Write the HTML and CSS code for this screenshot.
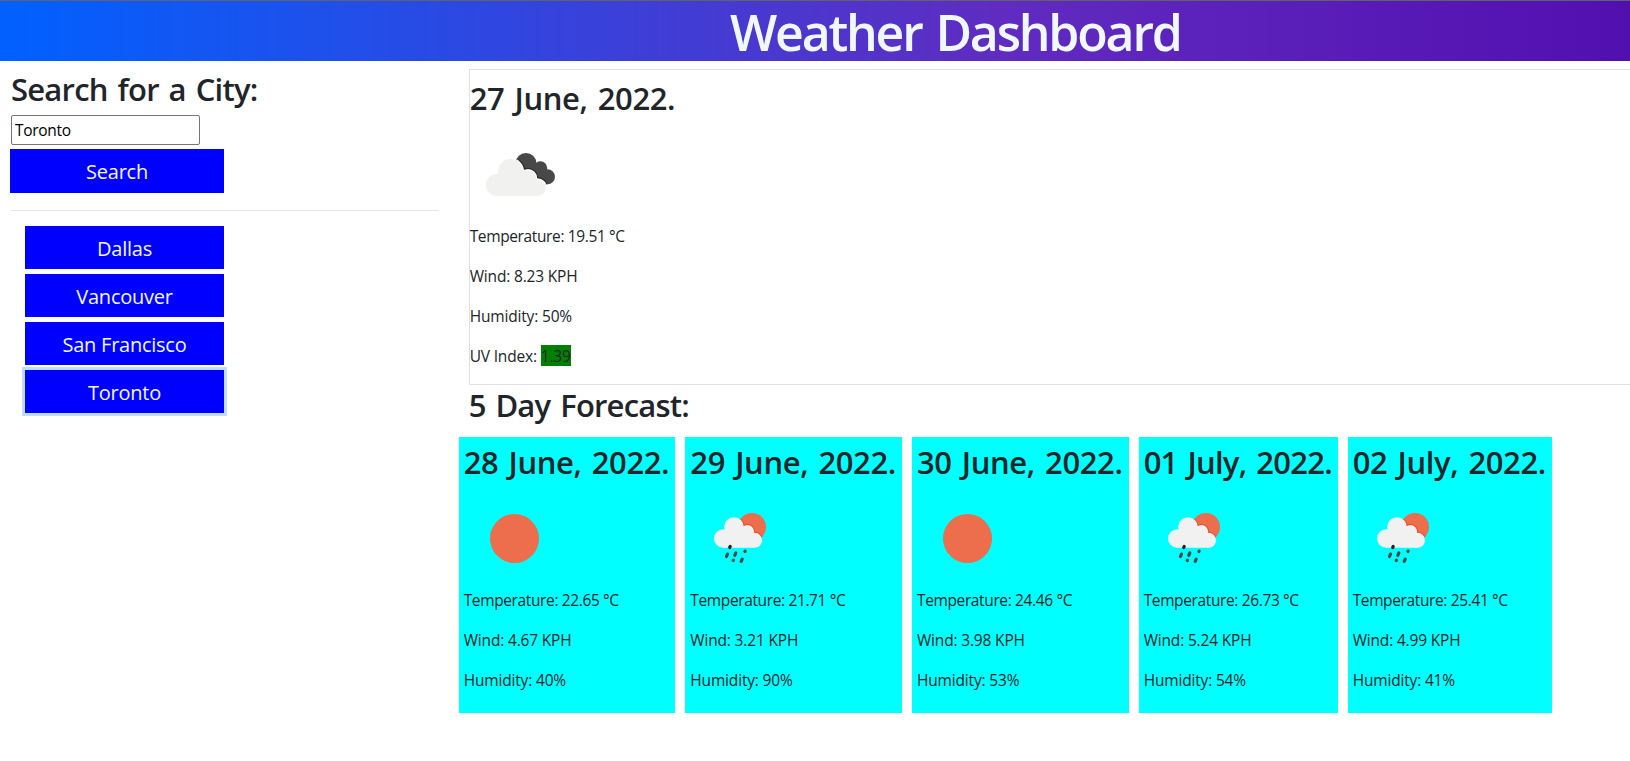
FILE: index.html
```html
<!DOCTYPE html>
<html lang="en">
<head>
<meta charset="utf-8">
<title>Weather Dashboard</title>
<link rel="stylesheet" href="styles.css">
</head>
<body>
<svg width="0" height="0" class="defs" aria-hidden="true">
  <clipPath id="sun-clip"><circle cx="62" cy="39" r="14"/></clipPath>
  <clipPath id="dark-clip"><circle cx="56" cy="38.500" r="10.500"/><circle cx="70.500" cy="43" r="6.700"/><circle cx="77.500" cy="51.800" r="7.500"/><path d="M50 40L68 40L78 59L70 59z"/></clipPath>
  <symbol id="sun" viewBox="0 0 100 100"><circle cx="50.500" cy="50.500" r="24.500" fill="#ec6e4c"/></symbol>
  <symbol id="rain" viewBox="0 0 100 100">
    <circle cx="62" cy="39" r="14" fill="#ec6e4c"/>
    <g fill="#ea4c24" clip-path="url(#sun-clip)"><circle cx="44" cy="39" r="10.700"/><circle cx="57.500" cy="43.600" r="7.500"/><circle cx="64.600" cy="52.200" r="8.400"/></g>
    <g fill="#f1f1f1"><circle cx="33.200" cy="50.500" r="9.200"/><circle cx="44" cy="39" r="9.800"/><circle cx="57.500" cy="43.600" r="6.600"/><circle cx="64.600" cy="52.200" r="7.500"/><path d="M33 59.700V46L40 38H58L65 48V59.700z"/></g>
    <g stroke-linecap="round" stroke-width="3.200" stroke="#484848"><path stroke="#222" d="M40.200 58.500l-.5 1"/><path d="M37.500 66.100l-1 2.400M45.800 64.900l-1 2.400M55.100 63.200l-.2.300M43.400 72.200l-.2.300M52.200 71.100l-1 2.300"/></g>
  </symbol>
  <symbol id="clouds" viewBox="0 0 100 100">
    <g clip-path="url(#dark-clip)">
      <path fill="#484849" d="M40 20H90V65H40z"/>
      <g fill="#252526"><circle cx="40.500" cy="46.500" r="14.600"/><circle cx="58" cy="53.300" r="10.200"/><circle cx="67.500" cy="62.700" r="10.400"/></g>
      <g fill="#fff"><circle cx="40.500" cy="46.500" r="13.600"/><circle cx="58" cy="53.300" r="9.200"/><circle cx="67.500" cy="62.700" r="9.400"/></g>
    </g>
    <g fill="#f1f1f0"><circle cx="27" cy="59.900" r="11"/><circle cx="40.500" cy="46.500" r="12.400"/><circle cx="58" cy="53.300" r="8.100"/><circle cx="67.500" cy="62.700" r="8.200"/><path d="M27 70.900V54L36 46H56L67 57V70.900z"/></g>
  </symbol>
</svg>
<header class="header"><h1 class="header-title">Weather Dashboard</h1></header>
<main class="layout">
  <aside class="sidebar">
    <h2 class="heading heading-search">Search for a City:</h2>
    <input class="city-input" type="text" value="Toronto">
    <button class="btn btn-search">Search</button>
    <hr class="divider">
    <div class="history">
      <button class="btn">Dallas</button>
      <button class="btn">Vancouver</button>
      <button class="btn">San Francisco</button>
      <button class="btn btn-focus">Toronto</button>
    </div>
  </aside>
  <section class="content">
    <article class="today">
      <h2 class="heading">27 June, 2022.</h2>
      <svg class="icon"><use href="#clouds"/></svg>
      <p class="temp">Temperature: 19.51 °C</p>
      <p>Wind: 8.23 KPH</p>
      <p>Humidity: 50%</p>
      <p>UV Index: <span class="uv">1.39</span></p>
    </article>
    <h2 class="heading heading-forecast">5 Day Forecast:</h2>
    <div class="forecast">
      <article class="card card-june">
        <h2 class="heading">28 June, 2022.</h2>
        <svg class="icon"><use href="#sun"/></svg>
        <p class="temp">Temperature: 22.65 °C</p><p>Wind: 4.67 KPH</p><p>Humidity: 40%</p>
      </article>
      <article class="card card-june">
        <h2 class="heading">29 June, 2022.</h2>
        <svg class="icon"><use href="#rain"/></svg>
        <p class="temp">Temperature: 21.71 °C</p><p>Wind: 3.21 KPH</p><p>Humidity: 90%</p>
      </article>
      <article class="card card-june">
        <h2 class="heading">30 June, 2022.</h2>
        <svg class="icon"><use href="#sun"/></svg>
        <p class="temp">Temperature: 24.46 °C</p><p>Wind: 3.98 KPH</p><p>Humidity: 53%</p>
      </article>
      <article class="card card-july-first">
        <h2 class="heading">01 July, 2022.</h2>
        <svg class="icon"><use href="#rain"/></svg>
        <p class="temp">Temperature: 26.73 °C</p><p>Wind: 5.24 KPH</p><p>Humidity: 54%</p>
      </article>
      <article class="card card-july-second">
        <h2 class="heading">02 July, 2022.</h2>
        <svg class="icon"><use href="#rain"/></svg>
        <p class="temp">Temperature: 25.41 °C</p><p>Wind: 4.99 KPH</p><p>Humidity: 41%</p>
      </article>
    </div>
  </section>
</main>
</body>
</html>
```
FILE: styles.css
```css
* { box-sizing: border-box; }
body {
  margin: 0;
  overflow: hidden;
  background: #fff;
  color: #212529;
  font: 400 15.5px/24px "Segoe UI", "Open Sans", "Noto Sans", sans-serif;
}
.defs { position: absolute; }
.header {
  height: 61px;
  border-top: 1px solid #5f6368;
  background: linear-gradient(to right, #0061ff, #602bc0 62%, #520fb0);
}
.header-title {
  margin: 0;
  padding-left: 730px;
  color: #f0f8ff;
  font-size: 50px;
  font-weight: 600;
  line-height: 62px;
  white-space: nowrap;
  letter-spacing: -2.2px;
  word-spacing: 3px;
}
.layout { display: flex; }
.sidebar { width: 458.67px; padding: 9px 20px 0 11px; flex: none; }
.heading {
  margin: 0;
  font-size: 31px;
  font-weight: 600;
  line-height: 38px;
  white-space: nowrap;
  letter-spacing: -0.4px;
  word-spacing: 2.6px;
}
.heading-search { margin-bottom: 7px; letter-spacing: -0.78px; }
.city-input {
  display: block;
  width: 189px;
  height: 30px;
  padding: 1px 3px;
  border: 1px solid #767676;
  border-radius: 2px;
  font: inherit;
  letter-spacing: -0.3px;
  color: #000;
}
.btn {
  display: block;
  width: 199px;
  height: 43px;
  padding: 2px 0 0;
  border: 0;
  background: #00f;
  color: #f0f8ff;
  font: inherit;
  font-size: 20px;
  letter-spacing: -0.25px;
}
.btn-search { width: 214px; height: 44px; margin: 4px 0 0 -1px; }
.divider { margin: 17px 0 15px; border: 0; border-top: 1px solid #e5e5e5; }
.history { display: flex; flex-direction: column; gap: 5px; padding-left: 14px; }
.btn-focus { box-shadow: 0 0 0 3px #bfdcff; }
.content { flex: 1; min-width: 0; padding-top: 8px; }
.today {
  height: 316px;
  margin-left: 10px;
  padding-top: 9px;
  border: solid #dee2e6;
  border-width: 1px 0 1px 1px;
}
.icon { display: block; width: 100px; height: 100px; margin-top: 7px; }
.today .icon { margin-top: 8px; margin-bottom: -1px; }
p { margin: 0 0 16px; white-space: nowrap; letter-spacing: -0.17px; }
.temp { letter-spacing: -0.37px; }
.uv { display: inline-block; height: 21px; line-height: 22px; background: #008000; }
.heading-forecast { margin: 1px 0 13px 10px; letter-spacing: -0.8px; }
.forecast { display: flex; gap: 10px; }
.card { height: 276px; padding: 6px 0 0 5px; background: #0ff; }
.card-june { width: 216.67px; }
.card-july-first { width: 199px; }
.card-july-first .heading { letter-spacing: -0.75px; }
.card-july-second { width: 204px; }
```
